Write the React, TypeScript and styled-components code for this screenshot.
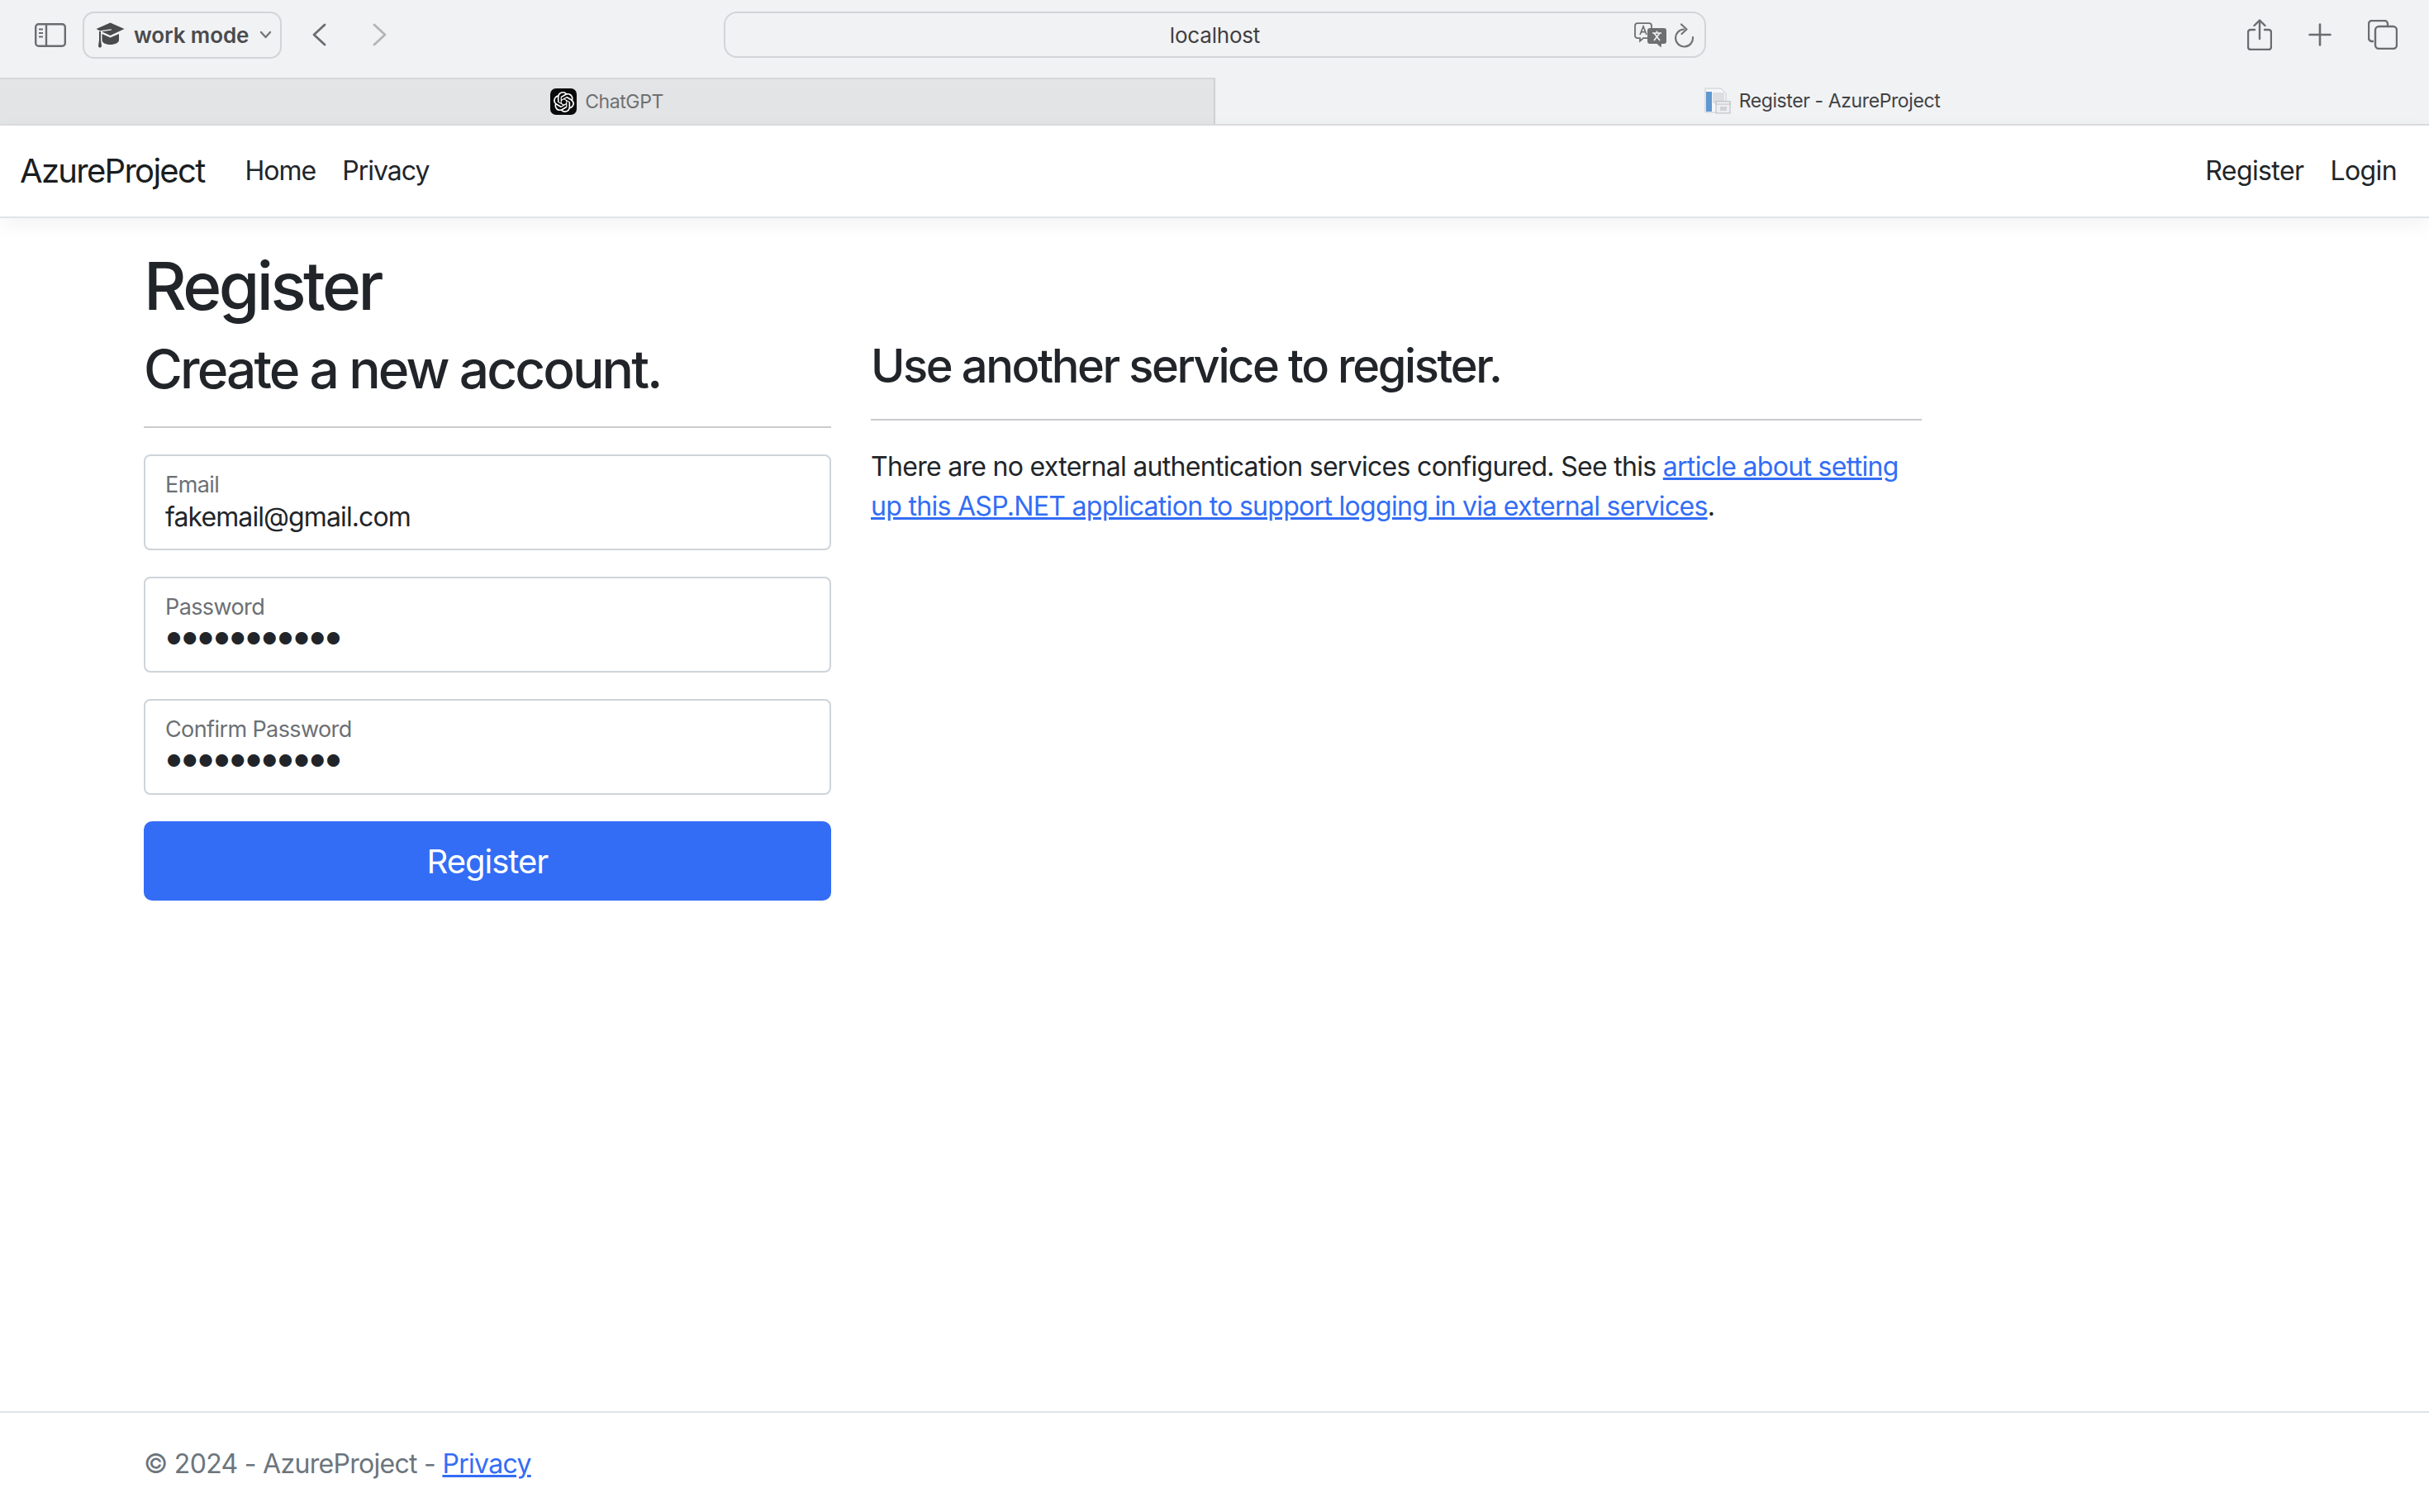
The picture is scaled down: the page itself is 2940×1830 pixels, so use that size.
import React from "react";
import styled, { createGlobalStyle } from "styled-components";
import { SiOpenai } from "react-icons/si";

const GlobalStyle = createGlobalStyle`
  html, body {
    margin: 0;
    padding: 0;
    background: #fff;
  }
  body {
    font-family: Inter, "Liberation Sans", sans-serif;
    color: #212529;
  }
  * {
    box-sizing: border-box;
  }
`;

const Page = styled.div`
  display: flex;
  flex-direction: column;
  height: 1830px;
  overflow: hidden;
`;

const Toolbar = styled.div`
  display: flex;
  align-items: center;
  height: 94px;
  padding: 0 38px 10px 42px;
  background: #f1f2f4;
  color: #6b6c6f;
`;

const ProfilePill = styled.div`
  display: flex;
  align-items: center;
  width: 241px;
  height: 57px;
  margin-left: 20px;
  padding-left: 14px;
  border: 2px solid #d3d4d7;
  border-radius: 14px;
  color: #4a4b4d;
  font-size: 26px;
  font-weight: 600;
  letter-spacing: -0.1px;
`;

const ProfileName = styled.span`
  margin: 0 13px 0 11px;
  white-space: nowrap;
`;

const NavArrows = styled.div`
  display: flex;
  gap: 56px;
  margin-left: 37px;
`;

const AddressBar = styled.div`
  position: relative;
  display: flex;
  align-items: center;
  justify-content: center;
  width: 1189px;
  height: 56px;
  margin-left: 408px;
  border: 2px solid #d3d4d7;
  border-radius: 16px;
  color: #3f4042;
  font-size: 26px;
  letter-spacing: -0.2px;
`;

const AddressIcons = styled.div`
  position: absolute;
  right: 12px;
  top: 11px;
  display: flex;
  align-items: center;
  gap: 9px;
`;

const ToolbarActions = styled.div`
  display: flex;
  align-items: center;
  gap: 44px;
  margin-left: auto;
`;

const TabBar = styled.div`
  display: flex;
  height: 58px;
  border-bottom: 2px solid #dcdcde;
  font-size: 23px;
  letter-spacing: -0.4px;
`;

const Tab = styled.div<{ $active?: boolean }>`
  display: flex;
  flex: 1;
  align-items: center;
  justify-content: center;
  gap: 10px;
  background: ${(p) => (p.$active ? "#f1f2f4" : "#e3e4e6")};
  border-top: ${(p) => (p.$active ? "none" : "2px solid #d5d6d8")};
  border-right: ${(p) => (p.$active ? "none" : "2px solid #cfd0d2")};
  color: ${(p) => (p.$active ? "#414244" : "#6f7072")};
`;

const TabLogo = styled.span`
  display: flex;
  align-items: center;
  justify-content: center;
  width: 32px;
  height: 32px;
  background: #0a0a0a;
  border-radius: 7px;
  color: #fff;
`;

const Navbar = styled.nav`
  display: flex;
  align-items: center;
  height: 112px;
  padding: 0 39px 2px 24px;
  background: #fff;
  border-bottom: 2px solid #dfe4e8;
  box-shadow: 0 8px 24px rgba(0, 0, 0, 0.05);
`;

const Brand = styled.a`
  margin-right: 49px;
  color: #1a1d20;
  font-size: 40px;
  letter-spacing: -1.7px;
`;

const NavList = styled.div<{ $right?: boolean }>`
  display: flex;
  gap: 32px;
  margin-left: ${(p) => (p.$right ? "auto" : "0")};
  letter-spacing: ${(p) => (p.$right ? "-0.6px" : "-1px")};
`;

const NavLink = styled.a`
  color: #212529;
  font-size: 32px;
`;

const Main = styled.main`
  flex: 1;
  padding: 34px 0 0 174px;
`;

const PageTitle = styled.h1`
  margin: 0 0 14px;
  font-size: 80px;
  font-weight: 550;
  line-height: 96px;
  letter-spacing: -3.5px;
`;

const Columns = styled.div`
  display: flex;
  gap: 48px;
`;

const FormColumn = styled.section`
  width: 832px;
`;

const AsideColumn = styled.section`
  width: 1272px;
`;

const FormHeading = styled.h2`
  margin: 0 0 31px;
  font-size: 64px;
  font-weight: 550;
  line-height: 77px;
  letter-spacing: -2.9px;
`;

const AsideHeading = styled.h3`
  margin: 2px 0 30px;
  font-size: 56px;
  font-weight: 550;
  line-height: 67px;
  letter-spacing: -2.4px;
`;

const Rule = styled.hr`
  height: 2px;
  margin: 0 0 32px;
  background: #c9cbcd;
  border: 0;
`;

const Field = styled.div`
  position: relative;
  margin-bottom: 32px;
`;

const FieldLabel = styled.label`
  position: absolute;
  top: 20px;
  left: 26px;
  color: #6c7074;
  font-size: 27px;
  letter-spacing: -0.6px;
`;

const FieldInput = styled.input<{ $secret?: boolean }>`
  display: block;
  width: 100%;
  height: 116px;
  padding: ${(p) => (p.$secret ? "36px 21px 12px" : "48px 24px 14px")};
  background: #fff;
  border: 2px solid #ced4da;
  border-radius: 8px;
  color: #212529;
  font-family: Inter, "Liberation Sans", sans-serif;
  font-size: ${(p) => (p.$secret ? "48px" : "32px")};
  letter-spacing: ${(p) => (p.$secret ? "-7.7px" : "-0.9px")};
  outline: none;
`;

const SubmitButton = styled.button`
  display: block;
  width: 100%;
  height: 96px;
  background: #336df5;
  border: 0;
  border-radius: 10px;
  color: #fff;
  font-family: Inter, "Liberation Sans", sans-serif;
  font-size: 40px;
  letter-spacing: -1px;
`;

const Note = styled.p`
  margin: 0;
  font-size: 32px;
  line-height: 48px;
  letter-spacing: -0.7px;
`;

const TextLink = styled.a`
  color: #336df5;
  text-decoration: underline;
`;

const Footer = styled.footer`
  height: 122px;
  padding: 38px 0 0 174px;
  border-top: 2px solid #dee2e6;
  color: #6c757d;
  font-size: 32px;
  line-height: 48px;
  letter-spacing: -0.7px;
`;

const SidebarIcon = () => (
  <svg width="38" height="29" viewBox="0 0 38 29" fill="none" stroke="#6b6c6f" strokeWidth="2.4">
    <rect x="1.2" y="1.2" width="35.6" height="26.6" rx="3.5" />
    <path d="M14 1.5v26" />
    <path d="M5 7.5h5M5 12h5M5 16.5h5" strokeWidth="2" />
  </svg>
);

const CapIcon = () => (
  <svg width="35" height="31" viewBox="0 0 35 31" fill="#4a4b4d">
    <path d="M17.5 0.5L34.5 8 17.5 16 7 11.2 19 9.6 18.6 8.2 4.8 10.2 0.5 8z" />
    <path d="M7.5 14l10 4.6L28 14v7.5c0 3-4.5 5.5-10.5 5.5S7.5 24.5 7.5 21.5z" />
    <path d="M4 11h2v10.5l1 7c0 1.5-1 2-2 2s-2-.5-2-2l1-7z" />
  </svg>
);

const Chevron = ({ flip, color }: { flip?: boolean; color: string }) => (
  <svg width="17" height="28" viewBox="0 0 17 28" fill="none" stroke={color} strokeWidth="2.8" strokeLinecap="round" strokeLinejoin="round">
    <path d={flip ? "M2 2l13 12L2 26" : "M15 2L2 14l13 12"} />
  </svg>
);

const SmallChevron = () => (
  <svg width="15" height="10" viewBox="0 0 15 10" fill="none" stroke="#77787a" strokeWidth="2.4" strokeLinecap="round" strokeLinejoin="round">
    <path d="M2 2l5.5 6L13 2" />
  </svg>
);

const TranslateIcon = () => (
  <svg width="40" height="31" viewBox="0 0 40 31">
    <path
      d="M4 1.2h14a3 3 0 0 1 3 3v12a3 3 0 0 1-3 3h-7l-4 3.6v-3.6H4a3 3 0 0 1-3-3v-12a3 3 0 0 1 3-3z"
      fill="#f1f2f4"
      stroke="#6e6f71"
      strokeWidth="1.8"
    />
    <path d="M7 15l4-10 4 10M8.4 11.6h5.2" fill="none" stroke="#6e6f71" strokeWidth="1.7" />
    <path d="M19 7h17a3 3 0 0 1 3 3v13a3 3 0 0 1-3 3h-3l-.5 4.5-5-4.5H19a3 3 0 0 1-3-3V10a3 3 0 0 1 3-3z" fill="#6e6f71" />
    <path d="M22 13h11M27.5 10.5V13M24 22l7-9M31 22l-7-9" fill="none" stroke="#f1f2f4" strokeWidth="1.7" />
  </svg>
);

const ReloadIcon = () => (
  <svg width="24" height="30" viewBox="0 0 24 30" fill="none" stroke="#727375" strokeWidth="2.2" strokeLinecap="round" strokeLinejoin="round">
    <path d="M11 7.5A10.5 10.5 0 1 0 22 17" />
    <path d="M8 1.5L14.5 7.5l-6 5.5" />
  </svg>
);

const ShareIcon = () => (
  <svg width="30" height="38" viewBox="0 0 30 38" fill="none" stroke="#6b6c6f" strokeWidth="2.4" strokeLinecap="round" strokeLinejoin="round">
    <path d="M9 13H4a3 3 0 0 0-3 3v18a3 3 0 0 0 3 3h22a3 3 0 0 0 3-3V16a3 3 0 0 0-3-3h-5" />
    <path d="M15 24V2M8.5 8L15 1.5 21.5 8" />
  </svg>
);

const PlusIcon = () => (
  <svg width="28" height="28" viewBox="0 0 28 28" fill="none" stroke="#6b6c6f" strokeWidth="2.6" strokeLinecap="round">
    <path d="M14 1.5v25M1.5 14h25" />
  </svg>
);

const CopyIcon = () => (
  <svg width="36" height="36" viewBox="0 0 36 36" fill="none" stroke="#6b6c6f" strokeWidth="2.4">
    <path d="M7 26H5a4 4 0 0 1-4-4V5a4 4 0 0 1 4-4h15a4 4 0 0 1 4 4v3" />
    <rect x="9" y="8" width="26" height="27" rx="4.5" />
  </svg>
);

const PageFavicon = () => (
  <svg width="32" height="32" viewBox="0 0 32 32">
    <path d="M1 1h19l6 6v23H1z" fill="#f5f6f7" stroke="#c9cbce" />
    <rect x="2" y="5" width="7" height="24" fill="#5f97d0" />
    <rect x="10" y="6" width="14" height="13" fill="#dcdee1" />
    <rect x="14" y="17" width="17" height="14" fill="#eceef0" stroke="#b9bbbf" />
    <rect x="14" y="17" width="17" height="3" fill="#f8f8f9" stroke="#b9bbbf" />
    <rect x="19" y="23" width="8" height="5" fill="#d0d2d5" />
  </svg>
);

const App = () => {
  return (
    <Page>
      <GlobalStyle />
      <Toolbar>
        <SidebarIcon />
        <ProfilePill>
          <CapIcon />
          <ProfileName>work mode</ProfileName>
          <SmallChevron />
        </ProfilePill>
        <NavArrows>
          <Chevron color="#6b6c6f" />
          <Chevron flip color="#b3b4b6" />
        </NavArrows>
        <AddressBar>
          localhost
          <AddressIcons>
            <TranslateIcon />
            <ReloadIcon />
          </AddressIcons>
        </AddressBar>
        <ToolbarActions>
          <ShareIcon />
          <PlusIcon />
          <CopyIcon />
        </ToolbarActions>
      </Toolbar>
      <TabBar>
        <Tab>
          <TabLogo>
            <SiOpenai size={25} />
          </TabLogo>
          ChatGPT
        </Tab>
        <Tab $active>
          <PageFavicon />
          Register - AzureProject
        </Tab>
      </TabBar>
      <Navbar>
        <Brand>AzureProject</Brand>
        <NavList>
          <NavLink>Home</NavLink>
          <NavLink>Privacy</NavLink>
        </NavList>
        <NavList $right>
          <NavLink>Register</NavLink>
          <NavLink>Login</NavLink>
        </NavList>
      </Navbar>
      <Main>
        <PageTitle>Register</PageTitle>
        <Columns>
          <FormColumn>
            <FormHeading>Create a new account.</FormHeading>
            <Rule />
            <Field>
              <FieldInput type="email" defaultValue="fakemail@gmail.com" readOnly />
              <FieldLabel>Email</FieldLabel>
            </Field>
            <Field>
              <FieldInput $secret type="password" defaultValue="Fakemail123" readOnly />
              <FieldLabel>Password</FieldLabel>
            </Field>
            <Field>
              <FieldInput $secret type="password" defaultValue="Fakemail123" readOnly />
              <FieldLabel>Confirm Password</FieldLabel>
            </Field>
            <SubmitButton>Register</SubmitButton>
          </FormColumn>
          <AsideColumn>
            <AsideHeading>Use another service to register.</AsideHeading>
            <Rule />
            <Note>
              There are no external authentication services configured. See this{" "}
              <TextLink>article about setting up this ASP.NET application to support logging in via external services</TextLink>.
            </Note>
          </AsideColumn>
        </Columns>
      </Main>
      <Footer>
        © 2024 - AzureProject - <TextLink>Privacy</TextLink>
      </Footer>
    </Page>
  );
};

export default App;
